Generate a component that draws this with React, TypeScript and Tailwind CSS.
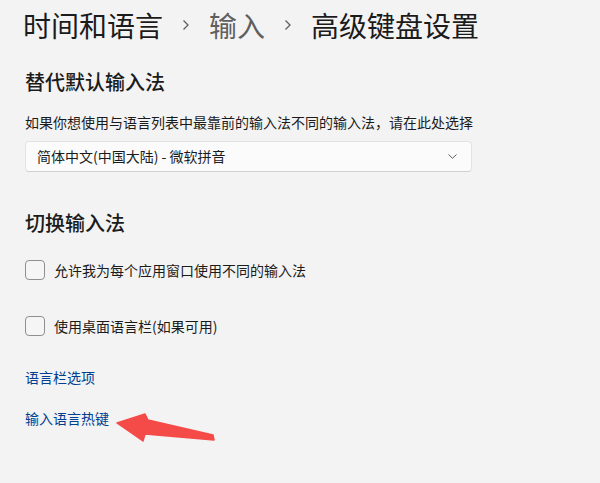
import type { ReactNode } from "react";

const FONT = { fontFamily: '"Noto Sans CJK SC", "Noto Sans", sans-serif' };

function Crumb() {
  return (
    <svg width="8" height="12" viewBox="0 0 8 12" className="mx-[19px] shrink-0">
      <polyline points="1.5,1.5 6,6 1.5,10.5" fill="none" stroke="#5f5f5f" strokeWidth="1.3" />
    </svg>
  );
}

function CheckRow({ children, className = "" }: { children: ReactNode; className?: string }) {
  return (
    <label className={`flex h-[20px] items-center gap-[9px] ${className}`}>
      <span className="h-[20px] w-[20px] rounded-[4px] border border-[#8f8f8f] bg-[#f5f5f5]" />
      <span className="text-[14px] leading-[20px] text-[#1b1b1b]">{children}</span>
    </label>
  );
}

export default function App() {
  return (
    <div className="relative h-[483px] w-[600px] overflow-hidden bg-[#f3f3f3] text-[#1b1b1b]" style={FONT}>
      <div className="px-[25px]">
        <div className="-ml-[2px] flex h-[50px] items-center text-[28px] leading-[36px]">
          <span>时间和语言</span>
          <Crumb />
          <span className="text-[#5f5f5f]">输入</span>
          <Crumb />
          <span>高级键盘设置</span>
        </div>

        <h2 className="mt-[18px] flex h-[28px] items-center text-[20px] font-medium">替代默认输入法</h2>

        <p className="mt-[16px] flex h-[20px] items-center text-[14px]">
          如果你想使用与语言列表中最靠前的输入法不同的输入法，请在此处选择
        </p>

        <div className="mt-[9px] flex h-[31px] w-[447px] items-center justify-between rounded-[4px] border border-[#e3e3e3] border-b-[#d0d0d0] bg-[#fbfbfb] pl-[11px] pr-[14px] text-[14px]">
          <span>简体中文(中国大陆) - 微软拼音</span>
          <svg width="9" height="5" viewBox="0 0 9 5">
            <polyline points="0.5,0.5 4.5,4.2 8.5,0.5" fill="none" stroke="#606060" strokeWidth="1" />
          </svg>
        </div>

        <h2 className="mt-[37px] flex h-[28px] items-center text-[20px] font-medium">切换输入法</h2>

        <CheckRow className="mt-[23px]">允许我为每个应用窗口使用不同的输入法</CheckRow>
        <CheckRow className="mt-[36px]">使用桌面语言栏(如果可用)</CheckRow>

        <a className="mt-[31px] flex h-[20px] items-center text-[14px] text-[#003e92]">语言栏选项</a>
        <a className="mt-[21px] flex h-[20px] items-center text-[14px] text-[#003e92]">输入语言热键</a>
      </div>

      <svg className="absolute left-0 top-0" width="600" height="483" viewBox="0 0 600 483">
        <polygon
          points="117,423 145,414 148,420 213,435 214,440 145,434 143,441"
          fill="#f54b48"
          stroke="#f54b48"
          strokeWidth="1.5"
          strokeLinejoin="round"
        />
      </svg>
    </div>
  );
}
